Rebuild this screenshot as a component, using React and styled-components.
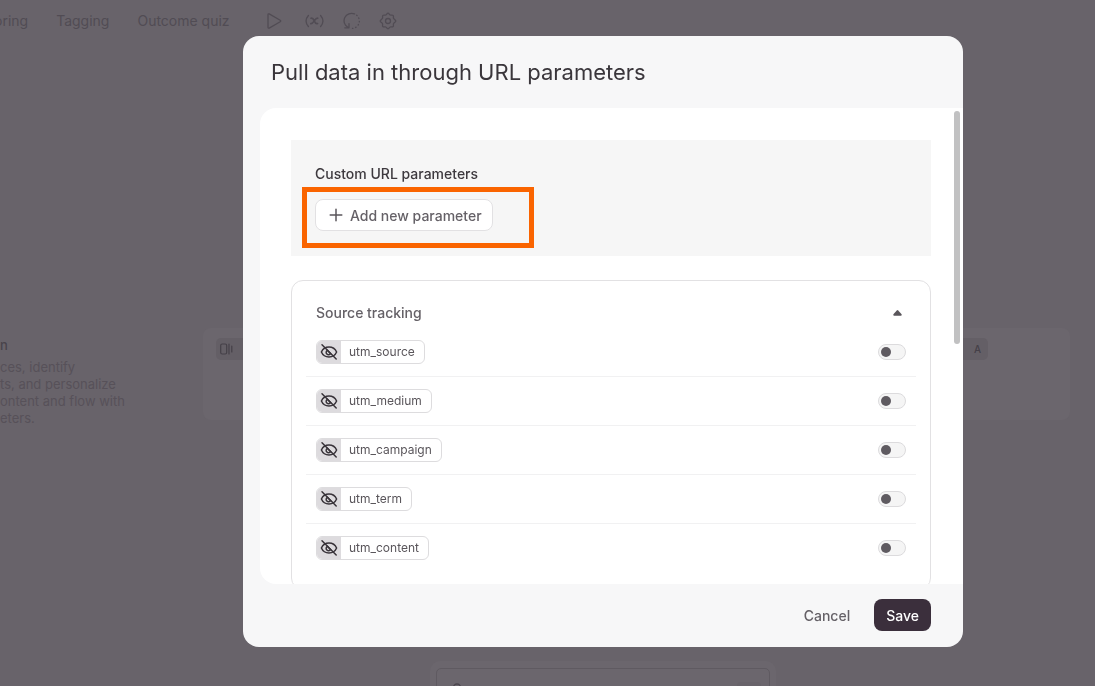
import { useState } from "react";
import styled, { createGlobalStyle } from "styled-components";

const GlobalStyle = createGlobalStyle`
  * {
    box-sizing: border-box;
  }
  body {
    margin: 0;
    background: #68636a;
    font-family: Inter, "Liberation Sans", sans-serif;
    overflow: hidden;
  }
  button {
    font-family: inherit;
    cursor: pointer;
  }
`;

/* page behind the dialog */

const Page = styled.div`
  display: flex;
  flex-direction: column;
  height: 100vh;
  overflow: hidden;
  color: #514c54;
`;

const TopBar = styled.header`
  display: flex;
  align-items: center;
  gap: 35px;
  height: 42px;
`;

const Tabs = styled.nav`
  display: flex;
  gap: 28px;
  margin-left: -6px;
`;

const Tab = styled.a`
  font-size: 14px;
  line-height: 20px;
  color: inherit;
  text-decoration: none;
  white-space: nowrap;
`;

const Tools = styled.div`
  display: flex;
  align-items: center;
  gap: 18px;
`;

const ToolButton = styled.button`
  display: flex;
  padding: 0;
  border: none;
  background: none;
  color: inherit;
`;

const ToolIcon = styled.svg`
  width: ${(props) => (props.$wide ? "24px" : "18px")};
  height: 18px;
  fill: none;
  stroke: currentColor;
  stroke-width: 1.3;
  stroke-linecap: round;
  stroke-linejoin: round;
`;

const Columns = styled.div`
  display: flex;
  margin-top: 286px;
  padding-right: 25px;
`;

const Blurb = styled.div`
  width: 203px;
  padding-top: 7px;
  color: #575159;
`;

const BlurbTitle = styled.h2`
  margin: 0 0 4px;
  font-size: 13px;
  font-weight: 500;
  line-height: 20px;
  color: #49434b;
`;

const BlurbLine = styled.div`
  font-size: 13px;
  line-height: 17px;
  white-space: nowrap;
`;

const FlowCard = styled.div`
  display: flex;
  flex: 1;
  justify-content: space-between;
  align-items: flex-start;
  height: 92px;
  padding: 10px 82px 0 13px;
  border-radius: 8px;
  background: #6b666d;
`;

const FlowChip = styled.div`
  display: flex;
  align-items: center;
  justify-content: ${(props) => (props.$end ? "flex-end" : "flex-start")};
  width: 44px;
  height: 22px;
  padding: 0 7px 0 4px;
  border-radius: 5px;
  background: #645f66;
  color: #454048;
  font-size: 10px;
  font-weight: 500;
`;

const Composer = styled.div`
  flex: none;
  width: 346px;
  height: 60px;
  margin: auto 0 -35px 430px;
  padding: 7px 6px;
  border-radius: 10px;
  background: #6b666d;
`;

const ComposerField = styled.div`
  display: flex;
  align-items: flex-start;
  justify-content: space-between;
  height: 46px;
  padding: 13px 8px 0 14px;
  border: 1px solid #5f5a61;
  border-radius: 5px;
`;

const ComposerChip = styled.div`
  width: 24px;
  height: 16px;
  border-radius: 4px;
  background: #68636a;
`;

/* dialog */

const Overlay = styled.div`
  position: fixed;
  inset: 0;
  display: flex;
  justify-content: center;
  padding: 36px 0 39px 111px;
`;

const Modal = styled.div`
  display: flex;
  flex-direction: column;
  width: 100%;
  max-width: 720px;
  border-radius: 16px;
  background: #f7f7f8;
  overflow: hidden;
`;

const ModalHeader = styled.div`
  display: flex;
  align-items: center;
  height: 72px;
  padding: 0 28px;
`;

const Title = styled.h1`
  margin: 0;
  font-size: 22px;
  font-weight: 400;
  line-height: 32px;
  color: #3a363b;
`;

const Body = styled.div`
  position: relative;
  flex: 1;
  min-height: 0;
  margin-left: 17px;
  border-radius: 16px 0 0 16px;
  background: #fff;
  overflow: hidden;
`;

const Scroller = styled.div`
  display: flex;
  flex-direction: column;
  gap: 24px;
  height: 100%;
  padding: 32px 32px 32px 31px;
  overflow-y: auto;
  scrollbar-width: none;
`;

const ScrollThumb = styled.div`
  position: absolute;
  top: 3px;
  right: 3px;
  width: 6px;
  height: 49%;
  border-radius: 3px;
  background: #c1c1c2;
`;

const CustomBox = styled.section`
  flex: none;
  padding: 24px 24px 25px;
  background: #f6f6f6;
`;

const CustomTitle = styled.h2`
  margin: 0 0 15px;
  font-size: 14px;
  font-weight: 500;
  line-height: 20px;
  color: #3d393e;
`;

const Highlighted = styled.div`
  position: relative;
  display: flex;
`;

const HighlightFrame = styled.div`
  position: absolute;
  top: -12px;
  left: -13px;
  width: 232px;
  height: 61px;
  border: 5px solid #fa6400;
  pointer-events: none;
`;

const AddButton = styled.button`
  display: flex;
  align-items: center;
  gap: 7px;
  height: 32px;
  padding: 0 10px 0 13px;
  border: 1px solid #e2e1e3;
  border-radius: 8px;
  background: #fff;
  color: #656167;
  font-size: 14px;
  font-weight: 500;
  white-space: nowrap;
`;

const Card = styled.section`
  flex: none;
  padding-bottom: 16px;
  border: 1px solid #e2e1e3;
  border-radius: 12px;
`;

const CardHeader = styled.button`
  display: flex;
  align-items: center;
  justify-content: space-between;
  width: 100%;
  padding: 22px 28px 5px 24px;
  border: none;
  background: none;
  color: #656167;
  font-size: 14px;
  font-weight: 500;
  line-height: 20px;
`;

const List = styled.ul`
  margin: 0;
  padding: 0 14px;
  list-style: none;
`;

const Row = styled.li`
  display: flex;
  align-items: center;
  justify-content: space-between;
  height: 49px;
  padding: 0 10px;
  border-bottom: 1px solid #f1f1f2;

  &:last-child {
    border-bottom-color: transparent;
  }
`;

const Tag = styled.label`
  display: flex;
  height: 24px;
  border: 1px solid #dddcde;
  border-radius: 6px;
  overflow: hidden;
  font-size: 12px;
  line-height: 22px;
  color: #5a565b;
`;

const TagIcon = styled.span`
  display: flex;
  align-items: center;
  justify-content: center;
  width: 24px;
  background: #dddbde;
`;

const TagText = styled.span`
  padding: 0 9px 0 8px;
`;

const Switch = styled.input`
  appearance: none;
  display: flex;
  align-items: center;
  width: 28px;
  height: 16px;
  margin: 0;
  padding: 0 2px;
  border: 1px solid #dcdbdd;
  border-radius: 8px;
  background: #f5f5f5;
  cursor: pointer;

  &::before {
    content: "";
    width: 10px;
    height: 10px;
    border-radius: 50%;
    background: #5f5b61;
  }

  &:checked {
    justify-content: flex-end;
  }
`;

const ModalFooter = styled.div`
  display: flex;
  justify-content: flex-end;
  gap: 12px;
  padding: 15px 32px 16px;
`;

const FooterButton = styled.button`
  height: 32px;
  padding: 0 12px;
  border: none;
  border-radius: 8px;
  background: ${(props) => (props.$primary ? "#3b2f3c" : "transparent")};
  color: ${(props) => (props.$primary ? "#fff" : "#656167")};
  font-size: 14px;
  font-weight: 500;
`;

const HiddenIcon = () => (
  <svg width="18" height="18" viewBox="0 0 18 18" fill="none" stroke="#39343a" strokeWidth="1.5" strokeLinecap="round">
    <path d="M1.4 9C2.7 6 5.5 4 9 4s6.3 2 7.6 5c-1.3 3-4.1 5-7.6 5S2.7 12 1.4 9Z" />
    <path d="M7.3 7.3a2.4 2.4 0 1 0 3.3 3.3L7.3 7.3Z" />
    <path d="M2 1.8 16.2 16" />
  </svg>
);

const PlusIcon = () => (
  <svg width="14" height="14" viewBox="0 0 14 14" stroke="#5a565b" strokeWidth="1.5" strokeLinecap="round">
    <path d="M7 1.2v11.6M1.2 7h11.6" />
  </svg>
);

const ArrowUp = () => (
  <svg width="9" height="6" viewBox="0 0 9 6" fill="#5a565b">
    <path d="M3.8.4a1 1 0 0 1 1.4 0l3.2 3.6c.6.7.2 1.7-.7 1.7H1.3C.4 5.7 0 4.7.6 4Z" />
  </svg>
);

const parameters = ["utm_source", "utm_medium", "utm_campaign", "utm_term", "utm_content"];

const Background = () => (
  <Page>
    <TopBar>
      <Tabs>
        <Tab href="#scoring">oring</Tab>
        <Tab href="#tagging">Tagging</Tab>
        <Tab href="#outcome">Outcome quiz</Tab>
      </Tabs>
      <Tools>
        <ToolButton aria-label="Preview">
          <ToolIcon viewBox="0 0 18 18">
            <path d="M3 2.7c0-.8.6-1.1 1.2-.8l11 6.3c.7.4.7 1.2 0 1.6l-11 6.3c-.6.3-1.2 0-1.2-.8Z" />
          </ToolIcon>
        </ToolButton>
        <ToolButton aria-label="Variables">
          <ToolIcon $wide viewBox="0 0 24 18">
            <path d="M7.4 3.5C4.400 7 4.400 11 7.400 14.500M19.600 3.500c3 3.500 3 7.500 0 11" />
            <path d="M10 6.200c3.800-1.200 2.700 6.800 6.600 5.300M16.800 6.200c-3-.6-4 6-7 5.400" strokeWidth="1.6" />
          </ToolIcon>
        </ToolButton>
        <ToolButton aria-label="History">
          <ToolIcon viewBox="0 0 18 18">
            <path d="M11.5 1.9A7.5 7.5 0 0 0 5 15.400M1.800 15.800h4.200v-4.200" />
            <path d="M13.7 3.200a7.5 7.5 0 0 1-4.200 13.200" strokeDasharray="0.6 2.8" />
          </ToolIcon>
        </ToolButton>
        <ToolButton aria-label="Settings">
          <ToolIcon viewBox="0 0 18 18">
            <path d="M9 1.2c1 0 1.300 1.400 2.200 1.800s2.100-.4 2.900.4 0 2 .4 2.900S16.800 8 16.800 9s-1.900 1.800-2.300 2.700.4 2.100-.4 2.900-2 0-2.900.4S10 16.800 9 16.800s-1.300-1.400-2.200-1.800-2.100.4-2.900-.4 0-2-.4-2.900S1.200 10 1.200 9s1.900-1.800 2.300-2.700-.4-2.100.4-2.900 2 0 2.900-.4S8 1.200 9 1.200Z" />
            <circle cx="9" cy="9" r="2.5" />
          </ToolIcon>
        </ToolButton>
      </Tools>
    </TopBar>
    <Columns>
      <Blurb>
        <BlurbTitle>n</BlurbTitle>
        <BlurbLine>ces, identify</BlurbLine>
        <BlurbLine>ts, and personalize</BlurbLine>
        <BlurbLine>ontent and flow with</BlurbLine>
        <BlurbLine>eters.</BlurbLine>
      </Blurb>
      <FlowCard>
        <FlowChip>
          <svg width="13" height="12" viewBox="0 0 13 12" fill="none" stroke="currentColor" strokeWidth="1.2" strokeLinecap="round">
            <rect x="0.7" y="1" width="6" height="10" rx="1.5" />
            <path d="M9 1v10M11.800 3v6" />
          </svg>
        </FlowChip>
        <FlowChip $end>A</FlowChip>
      </FlowCard>
    </Columns>
    <Composer>
      <ComposerField>
        <svg width="12" height="12" viewBox="0 0 12 12" fill="none" stroke="#4b464e" strokeWidth="1.3">
          <circle cx="6" cy="5.5" r="3.5" />
        </svg>
        <ComposerChip />
      </ComposerField>
    </Composer>
  </Page>
);

const App = () => {
  const [open, setOpen] = useState(true);

  return (
    <>
      <GlobalStyle />
      <Background />
      <Overlay>
        <Modal role="dialog" aria-labelledby="dialog-title">
          <ModalHeader>
            <Title id="dialog-title">Pull data in through URL parameters</Title>
          </ModalHeader>
          <Body>
            <Scroller>
              <CustomBox>
                <CustomTitle>Custom URL parameters</CustomTitle>
                <Highlighted>
                  <AddButton>
                    <PlusIcon />
                    Add new parameter
                  </AddButton>
                  <HighlightFrame />
                </Highlighted>
              </CustomBox>
              <Card>
                <CardHeader aria-expanded={open} onClick={() => setOpen(!open)}>
                  Source tracking
                  <ArrowUp />
                </CardHeader>
                {open && (
                  <List>
                    {parameters.map((name) => (
                      <Row key={name}>
                        <Tag htmlFor={name}>
                          <TagIcon>
                            <HiddenIcon />
                          </TagIcon>
                          <TagText>{name}</TagText>
                        </Tag>
                        <Switch type="checkbox" id={name} />
                      </Row>
                    ))}
                  </List>
                )}
              </Card>
            </Scroller>
            <ScrollThumb />
          </Body>
          <ModalFooter>
            <FooterButton>Cancel</FooterButton>
            <FooterButton $primary>Save</FooterButton>
          </ModalFooter>
        </Modal>
      </Overlay>
    </>
  );
};

export default App;
